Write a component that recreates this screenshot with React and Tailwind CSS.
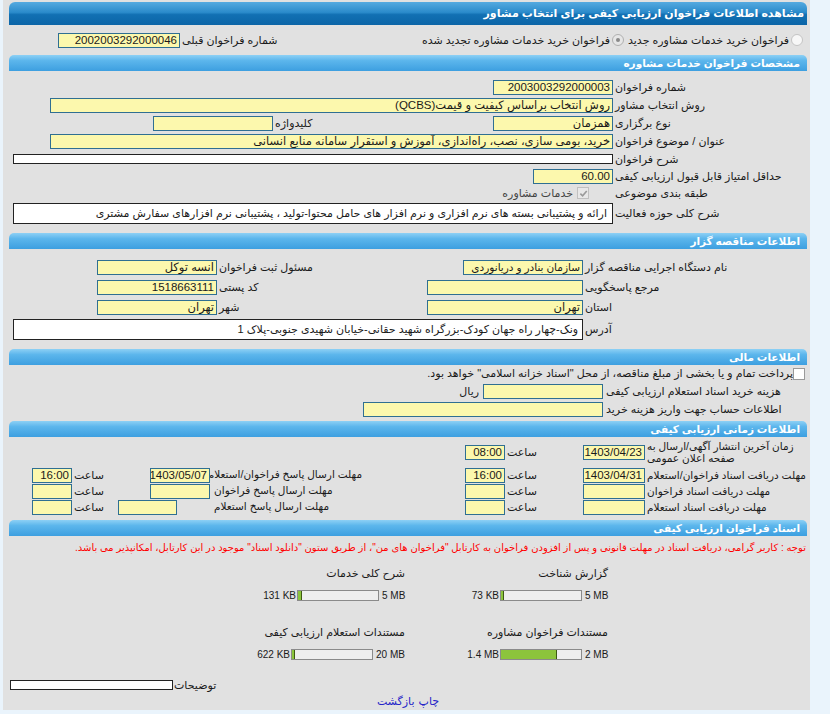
import React from "react";

const YC =
  "h-[15px] border border-[#2f6f92] bg-[#fcf8ad] px-[2px] text-right leading-[13px] whitespace-nowrap overflow-hidden shrink-0";

function YIn({ w, v = "", ts = "text-[11.5px]" }) {
  return <div className={`${YC} ${ts} ${w}`}>{v}</div>;
}

function Sec({ t, cls = "" }) {
  return (
    <div
      className={`h-[16px] rounded-t-[5px] bg-[linear-gradient(to_bottom,#8dd0f5_0%,#5cb6ec_35%,#3d9fe0_100%)] text-white font-bold text-[10.5px] leading-[16px] pr-[7px] ${cls}`}
    >
      {t}
    </div>
  );
}

function Bar({ w }) {
  return (
    <div dir="ltr" className="w-[82px] h-[11px] border border-[#8a8a8a] bg-[#eeeeee] flex shrink-0">
      <div className="h-full bg-[#8cc43c] border-r border-[#3d5a12]" style={{ width: w }} />
    </div>
  );
}

function FileBlock({ title, max, cur, w, mw }) {
  return (
    <div className="w-[203px]">
      <div className="h-[18px] leading-[18px] text-right whitespace-nowrap">{title}</div>
      <div className="mt-[4px] h-[18px] flex items-center text-[10px] whitespace-nowrap">
        <span dir="ltr" className={`${mw} pl-[3px] text-left`}>{max}</span>
        <Bar w={w} />
        <span dir="ltr" className="mr-[1px]">{cur}</span>
      </div>
    </div>
  );
}

function TimeRowRight({ label, date = "", time = "", tall = false }) {
  return (
    <div className={`flex items-center ${tall ? "h-[30px]" : "h-[16px]"}`}>
      <div className="w-[162px] pl-[2px] text-left leading-[12px] text-[10.5px] whitespace-nowrap">{label}</div>
      <YIn w="w-[62px]" v={date} />
      <div className="w-[78px] pl-[2px] text-left">ساعت</div>
      <YIn w="w-[40px]" v={time} />
    </div>
  );
}

function TimeRowLeft({ label, date = "", time = "", dw, dm }) {
  return (
    <div className="flex items-center w-[330px] h-[16px]">
      <div className="w-[150px] pl-[2px] text-left text-[10.5px] whitespace-nowrap">{label}</div>
      <div className={`${dm}`} />
      <YIn w={dw} v={date} />
      <div className="flex-1 pl-[2px] text-left">ساعت</div>
      <YIn w="w-[40px]" v={time} />
    </div>
  );
}

export default function App() {
  return (
    <div className="min-h-screen bg-[#eaf4fc] pl-[3px] font-['Liberation_Sans','DejaVu_Sans',sans-serif] text-[11px] text-[#1a1a1a]">
      <div dir="rtl" className="w-[807px] bg-[#e1e1e1] pt-[2px] pr-[3px] pl-[6px]">
        {/* Main header */}
        <div className="h-[23px] rounded-t-[6px] bg-[linear-gradient(to_bottom,#55aae0_0%,#2b8bcb_45%,#1270b3_55%,#0c65a7_100%)] text-white font-bold text-[11px] leading-[23px] pr-[3px]">
          مشاهده اطلاعات فراخوان ارزیابی کیفی برای انتخاب مشاور
        </div>

        {/* radio row */}
        <div className="h-[30px] flex items-center pr-[4px] whitespace-nowrap">
          <span className="w-[12px] h-[12px] rounded-full border border-[#c4c4c4] bg-[#f7f7f7] shrink-0" />
          <span className="mr-[2px]">فراخوان خرید خدمات مشاوره جدید</span>
          <span className="mr-[4px] w-[12px] h-[12px] rounded-full border border-[#b0b0b0] bg-[#e6e6e6] flex items-center justify-center shrink-0">
            <span className="w-[4px] h-[4px] rounded-full bg-[#8a8a8a]" />
          </span>
          <span className="mr-[2px]">فراخوان خرید خدمات مشاوره تجدید شده</span>
          <div className="flex-1" />
          <span className="ml-[2px]">شماره فراخوان قبلی</span>
          <YIn w="w-[122px]" v="2002003292000046" />
          <div className="w-[49px]" />
        </div>

        {/* Section 1 */}
        <Sec t="مشخصات فراخوان خدمات مشاوره" />
        <div className="pt-[7px] whitespace-nowrap">
          <div className="flex items-center h-[18px]">
            <div className="w-[194px] pl-[2px] text-left">شماره فراخوان</div>
            <YIn w="w-[120px]" v="2003003292000003" />
          </div>
          <div className="flex items-center h-[18px]">
            <div className="w-[194px] pl-[2px] text-left">روش انتخاب مشاور</div>
            <YIn w="w-[563px]" v="روش انتخاب براساس کیفیت و قیمت(QCBS)" />
          </div>
          <div className="flex items-center h-[18px]">
            <div className="w-[194px] pl-[2px] text-left">نوع برگزاری</div>
            <YIn w="w-[120px]" v="همزمان" />
            <div className="w-[220px] pl-[2px] text-left">کلیدواژه</div>
            <YIn w="w-[120px]" v="" />
          </div>
          <div className="flex items-center h-[19px]">
            <div className="w-[194px] pl-[2px] text-left">عنوان / موضوع فراخوان</div>
            <YIn w="w-[563px]" v="خرید، بومی سازی، نصب، راه‌اندازی، آموزش و استقرار سامانه منابع انسانی" />
          </div>
          <div className="flex items-center h-[16px]">
            <div className="w-[194px] pl-[2px] text-left">شرح فراخوان</div>
            <div className="w-[600px] h-[10px] border border-[#222] bg-white shrink-0" />
          </div>
          <div className="flex items-center h-[18px]">
            <div className="w-[194px] pl-[2px] text-left">حداقل امتیاز قابل قبول ارزیابی کیفی</div>
            <YIn w="w-[80px]" v="60.00" />
          </div>
          <div className="flex items-center h-[16px]">
            <div className="w-[194px] pl-[2px] text-left">طبقه بندی موضوعی</div>
            <span className="mr-[24px] w-[12px] h-[12px] border border-[#c0c0c0] bg-[#e8e8e8] flex items-center justify-center shrink-0">
              <svg width="9" height="9" viewBox="0 0 10 10">
                <path d="M1.5 5.2 L4 7.6 L8.6 2.2" stroke="#9a9a9a" strokeWidth="1.8" fill="none" />
              </svg>
            </span>
            <span className="mr-[4px] text-[#444]">خدمات مشاوره</span>
          </div>
          <div className="flex items-center h-[25px]">
            <div className="w-[194px] pl-[2px] text-left">شرح کلی حوزه فعالیت</div>
            <div className="w-[600px] h-[21px] border border-[#222] bg-white pr-[5px] leading-[19px] overflow-hidden shrink-0">
              ارائه و پشتیبانی بسته های نرم افزاری و نرم افزار های حامل محتوا-تولید ، پشتیبانی نرم افزارهای سفارش مشتری
            </div>
          </div>
        </div>

        {/* Section 2 */}
        <Sec t="اطلاعات مناقصه گزار" cls="mt-[7px]" />
        <div className="pt-[8px] whitespace-nowrap">
          <div className="flex items-center h-[20px]">
            <div className="w-[224px] pl-[2px] text-left">نام دستگاه اجرایی مناقصه گزار</div>
            <div className="w-[263px] flex">
              <YIn w="w-[120px]" ts="text-[10.5px]" v="سازمان بنادر و دریانوردی" />
            </div>
            <div className="w-[103px] pl-[2px] text-left">مسئول ثبت فراخوان</div>
            <YIn w="w-[120px]" v="انسه توکل" />
          </div>
          <div className="flex items-center h-[20px]">
            <div className="w-[224px] pl-[2px] text-left">مرجع پاسخگویی</div>
            <div className="w-[263px] flex">
              <YIn w="w-[156px]" v="" />
            </div>
            <div className="w-[103px] pl-[2px] text-left">کد پستی</div>
            <YIn w="w-[120px]" v="1518663111" />
          </div>
          <div className="flex items-center h-[20px]">
            <div className="w-[224px] pl-[2px] text-left">استان</div>
            <div className="w-[263px] flex">
              <YIn w="w-[156px]" v="تهران" />
            </div>
            <div className="w-[103px] pl-[2px] text-left">شهر</div>
            <YIn w="w-[120px]" v="تهران" />
          </div>
          <div className="flex items-center h-[25px]">
            <div className="w-[224px] pl-[2px] text-left">آدرس</div>
            <div className="w-[570px] h-[21px] border border-[#222] bg-white pr-[4px] leading-[19px] overflow-hidden shrink-0">
              ونک-چهار راه جهان کودک-بزرگراه شهید حقانی-خیابان شهیدی جنوبی-پلاک 1
            </div>
          </div>
        </div>

        {/* Section 3 */}
        <Sec t="اطلاعات مالی" cls="mt-[7px]" />
        <div className="whitespace-nowrap">
          <div className="flex items-center h-[17px] pr-[2px]">
            <span className="w-[12px] h-[12px] border border-[#9a9a9a] bg-white shrink-0" />
            <span>پرداخت تمام و یا بخشی از مبلغ مناقصه، از محل "اسناد خزانه اسلامی" خواهد بود.</span>
          </div>
          <div className="flex items-center h-[18px]">
            <div className="w-[204px] pl-[3px] text-left">هزینه خرید اسناد استعلام ارزیابی کیفی</div>
            <YIn w="w-[120px]" v="" />
            <span className="mr-[4px]">ریال</span>
          </div>
          <div className="flex items-center h-[18px]">
            <div className="w-[204px] pl-[3px] text-left">اطلاعات حساب جهت واریز هزینه خرید</div>
            <YIn w="w-[240px]" v="" />
          </div>
        </div>

        {/* Section 4 */}
        <Sec t="اطلاعات زمانی ارزیابی کیفی" cls="mt-[3px]" />
        <div>
          <TimeRowRight
            tall
            label={
              <>
                زمان آخرین انتشار آگهی/ارسال به
                <br />
                صفحه اعلان عمومی
              </>
            }
            date="1403/04/23"
            time="08:00"
          />
          <div className="flex items-center">
            <TimeRowRight label="مهلت دریافت اسناد فراخوان/استعلام" date="1403/04/31" time="16:00" />
            <div className="w-[103px]" />
            <TimeRowLeft label="مهلت ارسال پاسخ فراخوان/استعلام" date="1403/05/07" time="16:00" dw="w-[60px]" dm="w-[2px]" />
          </div>
          <div className="flex items-center">
            <TimeRowRight label="مهلت دریافت اسناد فراخوان" />
            <div className="w-[103px]" />
            <TimeRowLeft label="مهلت ارسال پاسخ فراخوان" dw="w-[60px]" dm="w-[2px]" />
          </div>
          <div className="flex items-center">
            <TimeRowRight label="مهلت دریافت اسناد استعلام" />
            <div className="w-[103px]" />
            <TimeRowLeft label="مهلت ارسال پاسخ استعلام" dw="w-[59px]" dm="w-[35px]" />
          </div>
        </div>

        {/* Section 5 */}
        <Sec t="اسناد فراخوان ارزیابی کیفی" cls="mt-[5px]" />
        <div className="h-[22px] flex items-center pr-[1px] text-[#ff0000] text-[10px] whitespace-nowrap">
          توجه : کاربر گرامی، دریافت اسناد در مهلت قانونی و پس از افزودن فراخوان به کارتابل "فراخوان های من"، از طریق ستون "دانلود اسناد" موجود در این کارتابل، امکانپذیر می باشد.
        </div>
        <div className="pr-[199px] pt-[6px]">
          <div className="flex">
            <FileBlock title="گزارش شناخت" max="5 MB" cur="73 KB" w="3px" mw="w-[26px]" />
            <FileBlock title="شرح کلی خدمات" max="5 MB" cur="131 KB" w="4px" mw="w-[26px]" />
          </div>
          <div className="flex mt-[19px]">
            <FileBlock title="مستندات فراخوان مشاوره" max="2 MB" cur="1.4 MB" w="70%" mw="w-[26px]" />
            <FileBlock title="مستندات استعلام ارزیابی کیفی" max="20 MB" cur="622 KB" w="3px" mw="w-[32px]" />
          </div>
        </div>
        <div className="mt-[15px] h-[14px] flex items-center justify-end pl-[1px] whitespace-nowrap">
          <span className="ml-[1px]">توضیحات</span>
          <div className="w-[163px] h-[10px] border border-[#222] bg-white shrink-0" />
        </div>
        <div className="h-[18px] flex items-center justify-center gap-[4px] text-[#2323c8]">
          <span>چاپ</span>
          <span>بازگشت</span>
        </div>
      </div>
    </div>
  );
}
